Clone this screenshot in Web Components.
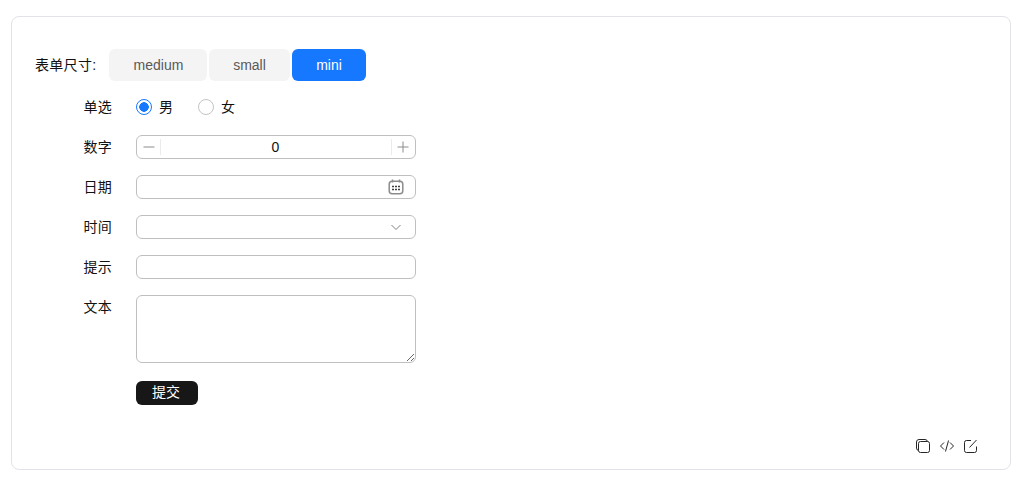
<!DOCTYPE html>
<html lang="zh">
<head>
<meta charset="utf-8">
<title>表单尺寸</title>
<style>
  body {
    margin: 0;
    padding: 16px 12px 12px 11px;
    background: #fff;
    color: #111;
    font: 14px/22px "Liberation Sans", "Noto Sans CJK SC", sans-serif;
  }
</style>
</head>
<body>
<demo-card>
  <size-picker label="表单尺寸:" options="medium,small,mini" value="mini"></size-picker>
  <form-row label="单选">
    <radio-item checked>男</radio-item>
    <radio-item>女</radio-item>
  </form-row>
  <form-row label="数字"><number-input value="0"></number-input></form-row>
  <form-row label="日期"><text-field icon="calendar"></text-field></form-row>
  <form-row label="时间"><text-field icon="chevron"></text-field></form-row>
  <form-row label="提示"><text-field></text-field></form-row>
  <form-row label="文本"><text-area></text-area></form-row>
  <form-row label=""><submit-button>提交</submit-button></form-row>
  <code-actions slot="actions"></code-actions>
</demo-card>

<script>
class DemoCard extends HTMLElement {
  constructor() {
    super();
    this.attachShadow({ mode: "open" });
    this.shadowRoot.innerHTML = `
    <style>
      :host {
        display: flex;
        flex-direction: column;
        box-sizing: border-box;
        width: 1000px;
        height: 454px;
        padding: 32px 31px 15px 23px;
        border: 1px solid #e2e3e8;
        border-radius: 8px;
        background: #fff;
      }
      .body {
        flex: 1;
        display: flex;
        flex-direction: column;
        gap: 16px;
      }
      ::slotted(size-picker) {
        margin-bottom: -2px;
      }
    </style>
    <div class="body"><slot></slot></div>
    <slot name="actions"></slot>`;
  }
}

class SizePicker extends HTMLElement {
  constructor() {
    super();
    this.attachShadow({ mode: "open" });
    const value = this.getAttribute("value");
    const buttons = this.getAttribute("options").split(",").map((name) =>
      `<button class="${name === value ? "active" : ""} ${name}">${name}</button>`
    ).join("");
    this.shadowRoot.innerHTML = `
    <style>
      :host {
        display: flex;
        align-items: center;
        height: 32px;
      }
      .label {
        width: 74px;
        white-space: nowrap;
        letter-spacing: 0.3px;
      }
      .group {
        display: flex;
        gap: 2px;
      }
      button {
        height: 32px;
        padding: 0;
        border: 0;
        border-radius: 6px;
        background: #f4f4f4;
        color: #595959;
        font: inherit;
      }
      .medium { width: 98px; padding-left: 1px; }
      .small { width: 81px; }
      .mini { width: 74px; }
      .active {
        background: #1677ff;
        color: #fff;
      }
    </style>
    <span class="label">${this.getAttribute("label")}</span>
    <div class="group">${buttons}</div>`;
  }
}

class FormRow extends HTMLElement {
  constructor() {
    super();
    this.attachShadow({ mode: "open" });
    this.shadowRoot.innerHTML = `
    <style>
      :host {
        display: flex;
        align-items: flex-start;
      }
      .label {
        flex: none;
        width: 77px;
        margin-right: 24px;
        line-height: 24px;
        text-align: right;
        letter-spacing: 0.3px;
      }
      .control {
        display: flex;
        align-items: center;
        min-height: 24px;
      }
    </style>
    <span class="label">${this.getAttribute("label")}</span>
    <div class="control"><slot></slot></div>`;
  }
}

class RadioItem extends HTMLElement {
  constructor() {
    super();
    this.attachShadow({ mode: "open" });
    this.shadowRoot.innerHTML = `
    <style>
      :host {
        display: inline-flex;
        align-items: center;
        gap: 7px;
        margin-right: 25px;
      }
      .dot {
        box-sizing: border-box;
        width: 16px;
        height: 16px;
        border: 1px solid #c4c4c4;
        border-radius: 50%;
        background: #fff;
      }
      :host([checked]) .dot {
        border-color: #1677ff;
        background: radial-gradient(circle, #1677ff 0 4.5px, #fff 5px);
      }
    </style>
    <span class="dot"></span><slot></slot>`;
  }
}

class NumberInput extends HTMLElement {
  constructor() {
    super();
    this.attachShadow({ mode: "open" });
    this.shadowRoot.innerHTML = `
    <style>
      :host {
        display: flex;
        box-sizing: border-box;
        width: 280px;
        height: 24px;
        border: 1px solid #bfbfbf;
        border-radius: 6px;
      }
      .step {
        flex: none;
        width: 24px;
        display: flex;
        align-items: center;
        justify-content: center;
      }
      .step svg { display: block; }
      .minus { box-shadow: inset -1px 0 0 #ebebeb; clip-path: inset(3px 0); }
      .plus { box-shadow: inset 1px 0 0 #ebebeb; clip-path: inset(3px 0); }
      input {
        flex: 1;
        min-width: 0;
        border: 0;
        padding: 0 1px 0 0;
        outline: 0;
        background: none;
        color: inherit;
        font: inherit;
        text-align: center;
      }
    </style>
    <span class="step minus"><svg width="12" height="12" viewBox="0 0 12 12"><path d="M.5 6h11" stroke="#8c8c8c" fill="none"/></svg></span>
    <input value="${this.getAttribute("value")}">
    <span class="step plus"><svg width="12" height="12" viewBox="0 0 12 12"><path d="M.5 6h11M6 .5v11" stroke="#8c8c8c" fill="none"/></svg></span>`;
  }
}

const FIELD_ICONS = {
  calendar: `<svg width="16" height="16" viewBox="0 0 16 16" fill="none"><rect x="1.200" y="2.200" width="13.600" height="12.600" rx="3" stroke="#8c8c8c" stroke-width="1.500"/><path d="M4.500 .5v3M11.500 .5v3" stroke="#8c8c8c" stroke-width="1.500"/><path d="M4 7.500h2M7 7.500h2M10 7.500h2M4 10.500h2M7 10.500h2M10 10.500h2" stroke="#404040" stroke-width="1.500"/></svg>`,
  chevron: `<svg width="12" height="12" viewBox="0 0 12 12" fill="none"><path d="M1.500 4l4.500 4.500L10.500 4" stroke="#808080"/></svg>`
};

class TextField extends HTMLElement {
  constructor() {
    super();
    this.attachShadow({ mode: "open" });
    const icon = FIELD_ICONS[this.getAttribute("icon")] || "";
    this.shadowRoot.innerHTML = `
    <style>
      :host {
        display: flex;
        align-items: center;
        box-sizing: border-box;
        width: 280px;
        height: 24px;
        padding: 0 13px 0 11px;
        border: 1px solid #bfbfbf;
        border-radius: 6px;
      }
      :host([icon="calendar"]) { padding-right: 11px; }
      input {
        flex: 1;
        min-width: 0;
        border: 0;
        padding: 0;
        outline: 0;
        background: none;
        font: inherit;
      }
      svg { display: block; flex: none; }
    </style>
    <input>${icon}`;
  }
}

class TextArea extends HTMLElement {
  constructor() {
    super();
    this.attachShadow({ mode: "open" });
    this.shadowRoot.innerHTML = `
    <style>
      :host { display: block; margin-bottom: 2px; }
      textarea {
        display: block;
        box-sizing: border-box;
        width: 280px;
        height: 68px;
        padding: 4px 11px;
        border: 1px solid #bfbfbf;
        border-radius: 6px;
        outline: 0;
        font: inherit;
      }
    </style>
    <textarea></textarea>`;
  }
}

class SubmitButton extends HTMLElement {
  constructor() {
    super();
    this.attachShadow({ mode: "open" });
    this.shadowRoot.innerHTML = `
    <style>
      :host { display: block; }
      button {
        display: block;
        width: 62px;
        height: 24px;
        padding: 0 2px 2px 0;
        border: 0;
        border-radius: 6px;
        background: #171717;
        color: #fff;
        font: inherit;
      }
    </style>
    <button><slot></slot></button>`;
  }
}

class CodeActions extends HTMLElement {
  constructor() {
    super();
    this.attachShadow({ mode: "open" });
    this.shadowRoot.innerHTML = `
    <style>
      :host {
        display: flex;
        justify-content: flex-end;
        gap: 8px;
      }
      svg { display: block; }
    </style>
    <svg width="16" height="16" viewBox="0 0 16 16" fill="none" stroke="#262626"><rect x="1.500" y="1.500" width="11" height="11" rx="2.500"/><rect x="3.500" y="3.500" width="11" height="11" rx="2" fill="#fff"/></svg>
    <svg width="16" height="16" viewBox="0 0 16 16" fill="none" stroke="#262626"><path d="M5 4.500 1.500 8 5 11.500M11 4.500 14.500 8 11 11.500M9.500 2.500l-3 11"/></svg>
    <svg width="16" height="16" viewBox="0 0 16 16" fill="none" stroke="#262626"><path d="M13.500 8.500V12.500a2 2 0 0 1-2 2h-8a2 2 0 0 1-2-2v-8a2 2 0 0 1 2-2h4.500M6.500 9.500l7-7.500"/></svg>`;
  }
}

customElements.define("demo-card", DemoCard);
customElements.define("size-picker", SizePicker);
customElements.define("form-row", FormRow);
customElements.define("radio-item", RadioItem);
customElements.define("number-input", NumberInput);
customElements.define("text-field", TextField);
customElements.define("text-area", TextArea);
customElements.define("submit-button", SubmitButton);
customElements.define("code-actions", CodeActions);
</script>
</body>
</html>
